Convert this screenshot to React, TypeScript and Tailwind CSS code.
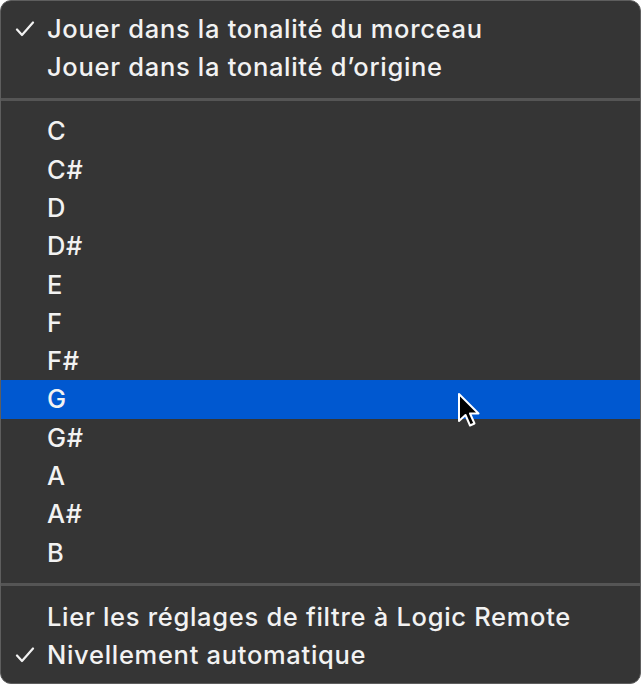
import React from "react";

const notes = ["C", "C#", "D", "D#", "E", "F", "F#", "G", "G#", "A", "A#", "B"];

const Check = () => (
  <svg width="20" height="16" viewBox="0 0 20 16" className="absolute left-[14px] top-1/2 -translate-y-1/2">
    <path d="M2 8.5 L7 14 L18 1.5" fill="none" stroke="#f2f2f2" strokeWidth="2.2" strokeLinecap="round" strokeLinejoin="round" />
  </svg>
);

const Row = ({ label, checked, active }: { label: string; checked?: boolean; active?: boolean }) => (
  <div className={`relative h-[38.33px] flex items-center pl-[46px] ${active ? "bg-[#0058d0]" : ""}`}>
    {checked && <Check />}
    <span className="text-[#f2f2f2]">{label}</span>
    {active && (
      <svg width="26" height="38" viewBox="0 0 26 38" className="absolute left-[455px] top-[12px]">
        <path d="M3 2 L3 29 L9.5 23 L14 33.5 L18.5 31.5 L14 21.5 L22.5 21.5 Z" fill="#000" stroke="#fff" strokeWidth="2" strokeLinejoin="round" />
      </svg>
    )}
  </div>
);

const Separator = () => (
  <div className="h-[25.5px] flex items-center">
    <div className="w-full h-[3px] bg-[#555555]" />
  </div>
);

export default function App() {
  return (
    <div className="w-[641px] h-[684px] bg-white">
      <div
        className="w-full h-full rounded-[11px] border border-[#5e5e5e] bg-[#353535] pt-[9px] overflow-hidden text-[25.5px] tracking-[0.7px] font-medium"
        style={{ fontFamily: "Inter, 'Liberation Sans', sans-serif" }}
      >
        <Row label="Jouer dans la tonalité du morceau" checked />
        <Row label="Jouer dans la tonalité d’origine" />
        <Separator />
        {notes.map((n) => (
          <Row key={n} label={n} active={n === "G"} />
        ))}
        <Separator />
        <Row label="Lier les réglages de filtre à Logic Remote" />
        <Row label="Nivellement automatique" checked />
      </div>
    </div>
  );
}
